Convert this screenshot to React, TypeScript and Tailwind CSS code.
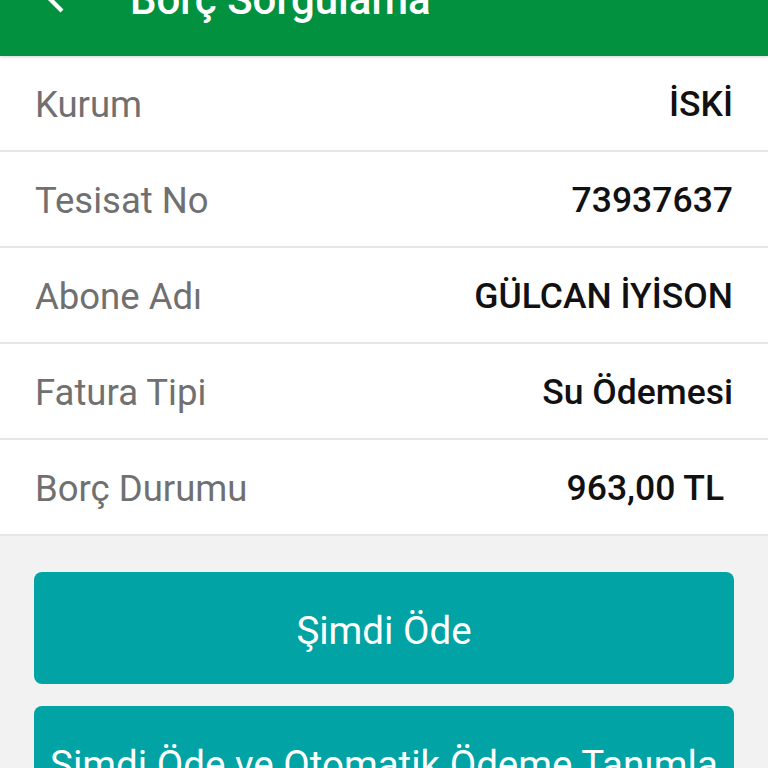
const rows = [
  { label: "Kurum", value: "İSKİ" },
  { label: "Tesisat No", value: "73937637" },
  { label: "Abone Adı", value: "GÜLCAN İYİSON" },
  { label: "Fatura Tipi", value: "Su Ödemesi" },
  { label: "Borç Durumu", value: "963,00 TL\u00A0" },
]

function BackArrow() {
  return (
    <svg viewBox="0 0 24 24" className="w-[51px] h-[51px]" fill="#ffffff">
      <path d="M20 11H7.83l5.59-5.59L12 4l-8 8 8 8 1.41-1.41L7.83 13H20v-2z" />
    </svg>
  )
}

export default function App() {
  return (
    <div className="w-[768px] h-[768px] overflow-hidden bg-[#f2f2f2] font-['Roboto',sans-serif]">
      {/* Toolbar (top part is cut off in the screenshot) */}
      <div className="relative z-10 h-[56px] overflow-hidden bg-[#02923f] shadow-[0_1px_3px_rgba(0,0,0,0.18)]">
        <div className="-mt-[64px] flex h-[120px] items-center">
          <div className="ml-[35px] mt-[-2px] flex w-[51px] items-center justify-center">
            <BackArrow />
          </div>
          <h1 className="ml-[44px] mt-[8px] text-[42px] font-medium leading-none text-white">Borç Sorgulama</h1>
        </div>
      </div>

      {/* Details */}
      <div className="bg-white">
        {rows.map((row) => (
          <div
            key={row.label}
            className="flex h-[96px] items-center justify-between border-b-2 border-[#e6e6e6] px-[35px] pt-[4px]"
          >
            <span className="text-[36.5px] leading-none text-[#707070]">{row.label}</span>
            <span className="whitespace-pre text-[35.5px] font-medium leading-none text-[#111111]">{row.value}</span>
          </div>
        ))}
      </div>

      {/* Actions */}
      <div className="flex flex-col gap-[22px] px-[34px] pt-[36px]">
        <button className="flex h-[112px] items-center justify-center rounded-[8px] bg-[#01a3a4] pt-[6px] text-[38.5px] text-white">
          Şimdi Öde
        </button>
        <button className="flex h-[112px] items-center justify-center rounded-[8px] bg-[#01a3a4] pt-[6px] text-[38.5px] text-white">
          Şimdi Öde ve Otomatik Ödeme Tanımla
        </button>
      </div>
    </div>
  )
}
